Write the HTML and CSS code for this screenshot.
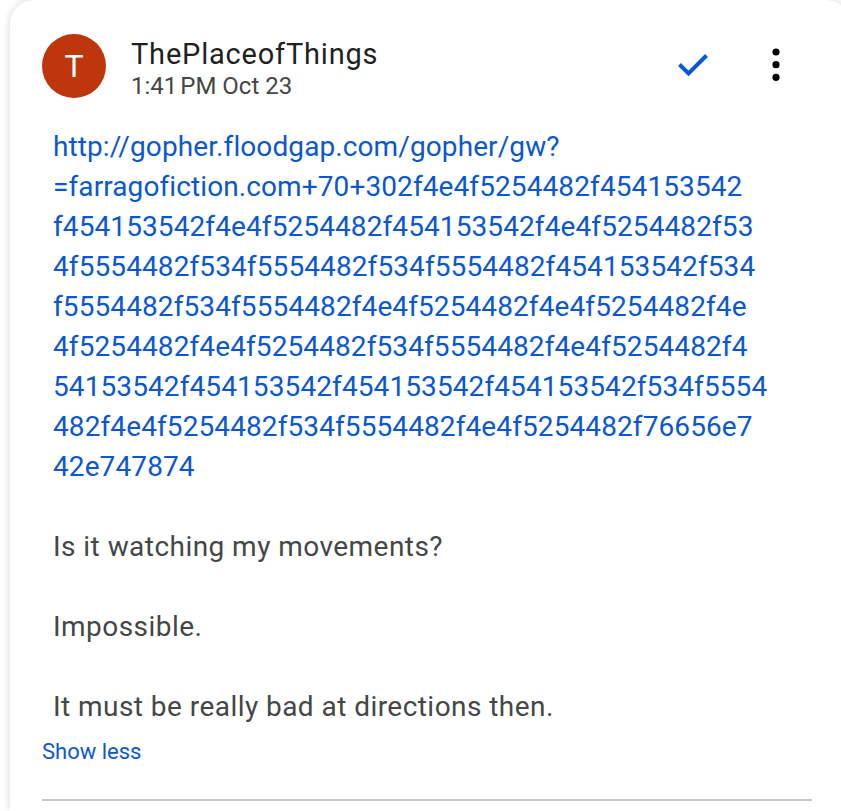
FILE: index.html
```html
<!DOCTYPE html>
<html lang="en">
<head>
<meta charset="utf-8">
<title>ThePlaceofThings</title>
<link rel="stylesheet" href="styles.css">
</head>
<body>
<div class="card">
  <div class="header">
    <div class="avatar">T</div>
    <div class="meta">
      <div class="name">ThePlaceofThings</div>
      <div class="time">1:41&#8239;PM Oct 23</div>
    </div>
    <div class="icon-btn check-btn">
      <svg width="40" height="40" viewBox="0 0 40 40"><polyline points="6.5,18.5 15.5,27.5 33.5,9.5" fill="none" stroke="#0b57d0" stroke-width="4"/></svg>
    </div>
    <div class="icon-btn more-btn">
      <svg width="40" height="40" viewBox="0 0 40 40"><circle cx="20" cy="6" r="3.6" fill="#000"/><circle cx="20" cy="18.7" r="3.6" fill="#000"/><circle cx="20" cy="31.3" r="3.6" fill="#000"/></svg>
    </div>
  </div>
  <div class="content">
    <p><a class="link" href="#">http://gopher.floodgap.com/gopher/gw?<br>=farragofiction.com+70+302f4e4f5254482f454153542<br>f454153542f4e4f5254482f454153542f4e4f5254482f53<br>4f5554482f534f5554482f534f5554482f454153542f534<br>f5554482f534f5554482f4e4f5254482f4e4f5254482f4e<br>4f5254482f4e4f5254482f534f5554482f4e4f5254482f4<br>54153542f454153542f454153542f454153542f534f5554<br>482f4e4f5254482f534f5554482f4e4f5254482f76656e7<br>42e747874</a></p>
    <p>Is it watching my movements?</p>
    <p>Impossible.</p>
    <p>It must be really bad at directions then.</p>
  </div>
  <a class="show-less" href="#">Show less</a>
  <div class="divider"></div>
</div>
</body>
</html>
```

FILE: styles.css
```css
html, body {
  margin: 0;
  padding: 0;
  background: #ffffff;
  overflow: hidden;
}

body {
  font-family: Roboto, "Noto Sans", Arial, sans-serif;
}

.card {
  margin-left: 10px;
  width: 840px;
  min-height: 811px;
  box-sizing: border-box;
  padding: 34px 38px 0 32px;
  background: #ffffff;
  border-radius: 24px 24px 0 0;
  box-shadow: 0 0 9px rgba(0, 0, 0, 0.16);
}

.header {
  display: flex;
  align-items: flex-start;
  height: 64px;
}

.avatar {
  width: 64px;
  height: 64px;
  flex: none;
  border-radius: 50%;
  background: #bf360c;
  color: #ffffff;
  font-size: 32px;
  line-height: 64px;
  text-align: center;
}

.meta {
  flex: 1;
  margin-left: 25px;
  padding-top: 2px;
}

.name {
  font-size: 29px;
  line-height: 36px;
  color: #1f1f1f;
  letter-spacing: 0.8px;
}

.time {
  font-size: 24px;
  line-height: 28px;
  color: #444746;
}

.icon-btn {
  width: 40px;
  height: 40px;
  flex: none;
  align-self: center;
}

.icon-btn svg {
  display: block;
}

.check-btn {
  margin-right: 43px;
}

.more-btn {
  margin-right: 16px;
}

.content {
  margin-top: 29px;
  padding-left: 11px;
  font-size: 28px;
  line-height: 40px;
  color: #444746;
  letter-spacing: 0.45px;
}

.content p {
  margin: 0 0 40px 0;
}

.content p:last-child {
  margin-bottom: 0;
}

.link {
  color: #0b57d0;
  text-decoration: none;
  letter-spacing: 0.1px;
}

.show-less {
  display: block;
  margin-top: 11px;
  font-size: 22px;
  line-height: 28px;
  color: #0b57d0;
  text-decoration: none;
}

.divider {
  margin-top: 33px;
  height: 2px;
  background: #c7c7c7;
}
```
